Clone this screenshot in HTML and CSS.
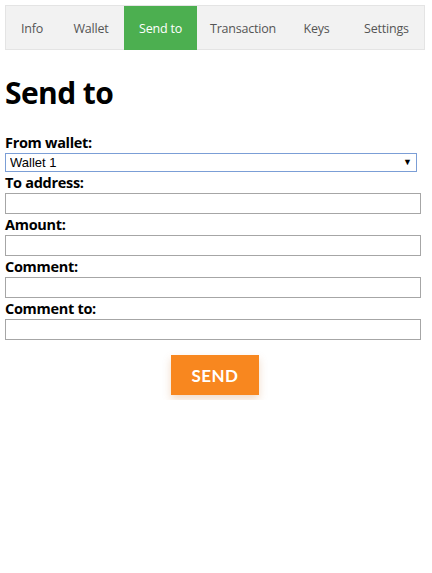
FILE: index.html
```html
<!DOCTYPE html>
<html>
<head>
<meta charset="utf-8">
<link rel="stylesheet" href="styles.css">
</head>
<body>
<nav class="tabs">
  <a class="tab tab-info">Info</a>
  <a class="tab tab-wallet">Wallet</a>
  <a class="tab tab-send active">Send to</a>
  <a class="tab tab-tx">Transaction</a>
  <a class="tab tab-keys">Keys</a>
  <a class="tab tab-settings">Settings</a>
</nav>
<h1 class="title">Send to</h1>
<form class="form">
  <label class="label">From wallet:</label>
  <div class="select-wrap">
    <select class="select"><option>Wallet 1</option></select>
    <span class="arrow">&#9660;</span>
  </div>
  <label class="label">To address:</label>
  <input class="field" type="text">
  <label class="label">Amount:</label>
  <input class="field" type="text">
  <label class="label">Comment:</label>
  <input class="field" type="text">
  <label class="label">Comment to:</label>
  <input class="field" type="text">
  <div class="actions">
    <button class="send" type="button">SEND</button>
  </div>
</form>
</body>
</html>
```
FILE: styles.css
```css
html, body {
  margin: 0;
  background: #fff;
}
body {
  padding: 5px 12px 5px 5px;
  font-family: "Open Sans", "Noto Sans", sans-serif;
  color: #000;
}
.tabs {
  display: flex;
  height: 45px;
  box-sizing: border-box;
  background: #f2f2f2;
  border: 1px solid #e4e4e4;
  width: 420px;
}
.tab {
  display: block;
  height: 43px;
  padding-top: 1px;
  box-sizing: border-box;
  line-height: 43px;
  text-align: center;
  font-size: 12.5px;
  color: #555;
  letter-spacing: -0.2px;
  overflow: visible;
}
.tab-info { width: 52px; }
.tab-wallet { width: 66px; }
.tab-send { width: 73px; }
.tab-tx { width: 92px; }
.tab-keys { width: 55px; }
.tab-settings { flex: 1; padding-left: 5px; }
.tab.active {
  background: #4caf50;
  color: #fff;
  height: 44px;
}
.title {
  margin: 23px 0 19px;
  font-size: 30px;
  line-height: 40px;
  font-weight: 700;
  letter-spacing: -0.6px;
}
.form {
  display: flex;
  flex-direction: column;
  width: 420px;
}
.label {
  display: block;
  font-size: 14.5px;
  font-weight: 700;
  line-height: 21px;
  letter-spacing: -0.3px;
}
.select-wrap {
  position: relative;
  width: 412px;
  height: 19px;
}
.select {
  appearance: none;
  -webkit-appearance: none;
  display: block;
  width: 412px;
  height: 19px;
  box-sizing: border-box;
  margin: 0;
  padding: 0 4px;
  border: 1px solid #7b9ed6;
  border-radius: 0;
  background: #fff;
  font-family: "Liberation Sans", Arial, sans-serif;
  font-size: 13px;
  color: #000;
  outline: none;
}
.arrow {
  position: absolute;
  right: 5px;
  top: 3px;
  font-size: 9px;
  line-height: 12px;
  color: #000;
  pointer-events: none;
}
.field {
  display: block;
  width: 416px;
  height: 21px;
  box-sizing: border-box;
  margin: 0;
  padding: 0 3px;
  border: 1px solid #a6a6a6;
  border-radius: 0;
  background: #fff;
  outline: none;
}
.actions {
  display: flex;
  justify-content: center;
  padding-top: 15px;
}
.send {
  width: 88px;
  height: 40px;
  border: none;
  background: #f8871f;
  color: #fff;
  font-family: "Lato", "Open Sans", sans-serif;
  font-weight: 700;
  font-size: 17px;
  letter-spacing: 0.5px;
  box-shadow: 0 4px 8px rgba(200, 110, 40, 0.25);
  padding: 0;
}
```
